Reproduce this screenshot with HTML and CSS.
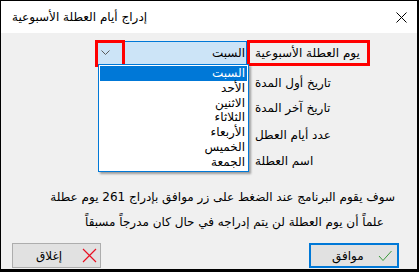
FILE: index.html
```html
<!DOCTYPE html>
<html lang="ar">
<head>
<meta charset="utf-8">
<link rel="stylesheet" href="styles.css">
</head>
<body>
<div class="window">
  <div class="titlebar">
    <span class="title">إدراج أيام العطلة الأسبوعية</span>
    <svg class="close" width="11" height="11" viewBox="0 0 11 11"><path d="M0.5 0.5 L10.5 10.5 M10.5 0.5 L0.5 10.5" stroke="#000" stroke-width="1" fill="none"/></svg>
  </div>
  <div class="content">
    <div class="form">
      <div class="row r1">
        <div class="field combo">
          <span class="chev-box"><svg width="9" height="6" viewBox="0 0 9 6"><path d="M0.5 0.5 L4.5 4.5 L8.5 0.5" stroke="#5a5a5a" stroke-width="1" fill="none"/></svg></span>
          <span class="combo-text">السبت</span>
        </div>
        <div class="label hl">يوم العطلة الأسبوعية</div>
      </div>
      <div class="row r2"><div class="field"></div><div class="label">تاريخ أول المدة</div></div>
      <div class="row r3"><div class="field"></div><div class="label">تاريخ آخر المدة</div></div>
      <div class="row r4"><div class="field"></div><div class="label">عدد أيام العطل</div></div>
      <div class="row r5"><div class="field"></div><div class="label">اسم العطلة</div></div>
    </div>
    <p class="msg m1">سوف يقوم البرنامج عند الضغط على زر موافق بإدراج 261 يوم عطلة</p>
    <p class="msg m2">علماً أن يوم العطلة لن يتم إدراجه في حال كان مدرجاً مسبقاً</p>
    <div class="buttons">
      <button class="btn close-btn"><span class="btn-text">إغلاق</span><svg width="15" height="15" viewBox="0 0 15 15"><path d="M1 1 L14 14 M14 1 L1 14" stroke="#e81123" stroke-width="1.2" fill="none"/></svg></button>
      <button class="btn ok-btn"><span class="btn-text">موافق</span><svg width="14" height="12" viewBox="0 0 14 12"><path d="M1 6 L5 10.5 L13.5 1" stroke="#3a9a3a" stroke-width="1" fill="none"/></svg></button>
    </div>
    <ul class="dropdown">
      <li class="sel">السبت</li>
      <li>الأحد</li>
      <li>الاثنين</li>
      <li>الثلاثاء</li>
      <li>الأربعاء</li>
      <li>الخميس</li>
      <li>الجمعة</li>
    </ul>
  </div>
</div>
</body>
</html>
```
FILE: styles.css
```css
* { box-sizing: border-box; }
html, body { margin: 0; padding: 0; }
body {
  background: #000;
  width: 419px;
  height: 272px;
  overflow: hidden;
  font-family: "Segoe UI", Tahoma, "DejaVu Sans", sans-serif;
  font-size: 12px;
  color: #000;
}
.window {
  margin: 1px 0 0 1px;
  width: 416px;
  height: 268px;
  background: #f0f0f0;
  display: flex;
  flex-direction: column;
}
.titlebar {
  height: 32px;
  background: #fff;
  display: flex;
  align-items: center;
  justify-content: space-between;
  padding: 0 10px 0 11px;
  flex-shrink: 0;
}
.title { direction: rtl; font-size: 12px; }
.close { display: block; }
.content {
  position: relative;
  flex: 1;
  padding-top: 7px;
}
.form { display: flex; flex-direction: column; }
.row {
  display: flex;
  height: 20px;
  align-items: center;
  padding-left: 94px;
}
.row.r1 { height: 26px; }
.row.r2 { margin-top: 7px; }
.row.r3 { margin-top: 5px; }
.row.r4 { margin-top: 7px; }
.row.r5 { margin-top: 6px; }
.field { width: 152px; height: 100%; }
.label {
  width: 123px;
  height: 100%;
  padding-left: 8px;
  direction: rtl;
  text-align: left;
  display: flex;
  align-items: center;
  justify-content: flex-end;
}
.label.hl { border: 3px solid #ff0000; padding-left: 5px; }
.combo {
  display: flex;
  align-items: center;
  background: #cce4f7;
  border: 1px solid #0078d7;
  height: 24px;
  margin-top: 1px;
  align-self: flex-start;
}
.chev-box {
  width: 30px;
  height: 27px;
  margin: -2px 0 -2px -1px;
  border: 3px solid #ff0000;
  display: flex;
  align-items: center;
  justify-content: center;
  padding-right: 9px;
}
.combo-text { flex: 1; text-align: right; direction: rtl; padding-right: 1px; }
.msg {
  margin: 0;
  direction: rtl;
  text-align: right;
  height: 25px;
  line-height: 25px;
}
.m1 { margin-top: 14px; padding-right: 22px; }
.m2 { padding-right: 33px; }
.buttons {
  display: flex;
  justify-content: space-between;
  padding: 8px 18px 0 11px;
}
.btn {
  font: inherit;
  height: 25px;
  display: flex;
  align-items: center;
  justify-content: space-between;
  padding: 0;
  color: #000;
}
.close-btn {
  width: 89px;
  background: #e1e1e1;
  border: 1px solid #adadad;
  padding: 0 3px 0 23px;
}
.ok-btn {
  width: 90px;
  background: #e1e1e1;
  border: 2px solid #0078d7;
  padding: 0 5px 0 21px;
}
.dropdown {
  position: absolute;
  left: 97px;
  top: 31px;
  width: 151px;
  margin: 0;
  padding: 1px;
  list-style: none;
  background: #fff;
  border: 1px solid #0078d7;
  box-shadow: 2px 2px 2px rgba(0,0,0,0.35);
}
.dropdown li {
  height: 14.8px;
  line-height: 14.8px;
  direction: rtl;
  text-align: right;
  padding-right: 2px;
}
.dropdown li.sel { background: #0078d7; color: #fff; }
```
